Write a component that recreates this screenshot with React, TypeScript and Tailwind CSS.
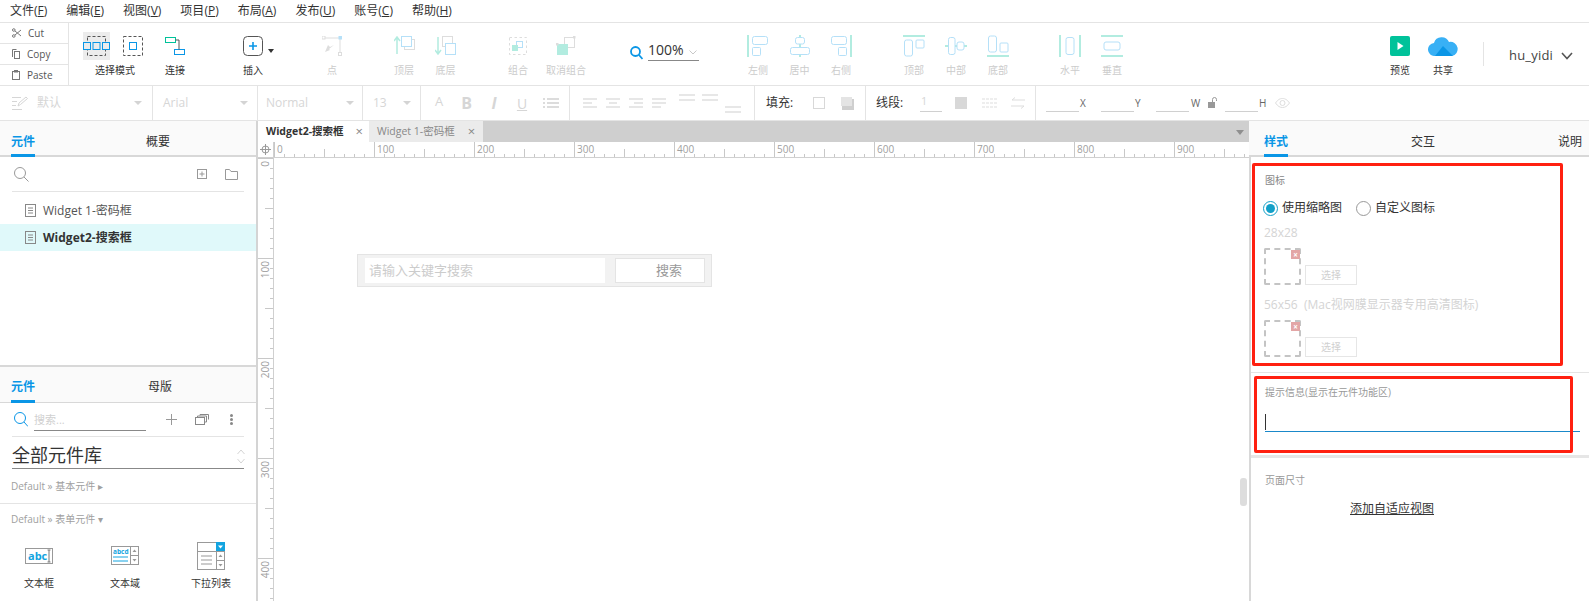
import type { ReactNode } from "react";

const menus = [
  ["文件", "F"],
  ["编辑", "E"],
  ["视图", "V"],
  ["项目", "P"],
  ["布局", "A"],
  ["发布", "U"],
  ["账号", "C"],
  ["帮助", "H"],
];

const BLUE = "#0a96e6";
const LINE = "#b5e0f8";
const TEAL = "#b2ece0";
const MUTED = "#d6d6d6";

function ToolBtn({ label, className = "", off = false, children }: { label: string; className?: string; off?: boolean; children: ReactNode }) {
  return (
    <div className={`flex flex-col items-center shrink-0 ${className}`}>
      <div className="h-[41px] pt-[4px] flex items-center justify-center">{children}</div>
      <div className={`text-[10px] leading-[12px] whitespace-nowrap ${off ? "text-[#cccccc]" : "text-[#333333]"}`}>{label}</div>
    </div>
  );
}

function Caret({ className = "" }: { className?: string }) {
  return <div className={`w-0 h-0 border-x-[4px] border-x-transparent border-t-[4px] border-t-[#d4d4d4] ${className}`} />;
}

function AlignIcon({ children }: { children: ReactNode }) {
  return (
    <svg width="22" height="22" viewBox="0 0 22 22" fill="none" stroke={LINE} strokeWidth="1">
      {children}
    </svg>
  );
}

function SelectIcon() {
  return (
    <div className="flex items-center gap-[13px] mr-[5px]">
      <div className="w-[27px] h-[28px] bg-[#ececec] flex items-center justify-center">
        <svg width="27" height="20" viewBox="0 0 27 20" fill="none">
          <rect x="4.5" y="0.5" width="18" height="19" stroke="#555" strokeDasharray="3 2" />
          <rect x="0.5" y="6.5" width="7" height="7" fill="#ececec" stroke={BLUE} />
          <rect x="10" y="6.5" width="7" height="7" fill="#ececec" stroke={BLUE} />
          <rect x="19.5" y="6.5" width="7" height="7" fill="#ececec" stroke={BLUE} />
        </svg>
      </div>
      <svg width="20" height="20" viewBox="0 0 20 20" fill="none">
        <rect x="0.5" y="0.5" width="19" height="19" stroke="#555" strokeDasharray="3 2" />
        <rect x="6.5" y="6.5" width="7" height="7" stroke={BLUE} />
      </svg>
    </div>
  );
}

function Ruler() {
  const ticks = [];
  for (let i = 0; i < 98; i++) {
    const x = i * 10 + 0.5;
    const h = i % 10 === 0 ? 15 : i % 5 === 0 ? 8 : 3;
    ticks.push(<line key={i} x1={x} x2={x} y1={15 - h} y2={15} stroke="#c8c8c8" />);
  }
  return (
    <svg width="975" height="15" className="block">
      {ticks}
      {[0, 100, 200, 300, 400, 500, 600, 700, 800, 900].map((n) => (
        <text key={n} x={n + 3} y={11} fontSize="10" fill="#a0a0a0">
          {n}
        </text>
      ))}
    </svg>
  );
}

function VRuler() {
  const ticks = [];
  for (let i = 0; i < 45; i++) {
    const y = i * 10 + 0.5;
    const w = i % 10 === 0 ? 15 : i % 5 === 0 ? 8 : 3;
    ticks.push(<line key={i} y1={y} y2={y} x1={15 - w} x2={15} stroke="#c8c8c8" />);
  }
  return (
    <svg width="15" height="445" className="block">
      {ticks}
      {[0, 100, 200, 300, 400].map((n) => (
        <text key={n} x={-n - 3} y={11} fontSize="10" fill="#a0a0a0" transform="rotate(-90)" textAnchor="end">
          {n}
        </text>
      ))}
    </svg>
  );
}

function IconSlot() {
  return (
    <div className="flex items-end gap-[4px] ml-[-1px]">
      <div className="relative w-[37px] h-[37px] border-2 border-dashed border-[#c4c4c4] rounded-[2px]">
        <div className="absolute right-[-1px] top-[0px] w-[9px] h-[9px] bg-[#e3a6a6] text-white text-[8px] leading-[9px] text-center font-bold">×</div>
      </div>
      <div className="w-[52px] h-[20px] border border-[#e6e6e6] text-[10px] leading-[18px] text-center text-[#d0d0d0]">选择</div>
    </div>
  );
}

function WidgetItem({ label, children }: { label: string; children: ReactNode }) {
  return (
    <div className="w-[86px] flex flex-col items-center">
      <div className="h-[32px] flex items-end justify-center">{children}</div>
      <div className="mt-[6px] text-[10px] leading-[14px] text-[#333333] whitespace-nowrap">{label}</div>
    </div>
  );
}

export default function App() {
  return (
    <div className="relative w-[1589px] h-[601px] overflow-hidden bg-white text-[#333333] font-['Open_Sans','Noto_Sans_CJK_SC',sans-serif]">
      {/* menu */}
      <div className="h-[23px] border-b border-[#e4e4e4] flex items-center gap-[19px] px-[10px] text-[12px]">
        {menus.map(([name, key]) => (
          <span key={key} className="whitespace-nowrap">
            {name}(<u>{key}</u>)
          </span>
        ))}
      </div>

      {/* main toolbar */}
      <div className="h-[63px] border-b border-[#e4e4e4] flex">
        <div className="w-[69px] shrink-0 border-r border-[#e4e4e4] flex flex-col text-[10px] text-[#555555]">
          <div className="h-[21px] border-b border-[#e4e4e4] flex items-center pl-[12px] gap-[7px]">
            <svg width="9" height="10" viewBox="0 0 9 10" fill="none" stroke="#777">
              <circle cx="1.8" cy="2" r="1.3" />
              <circle cx="1.8" cy="8" r="1.3" />
              <path d="M3 3l6 5M3 7l6-5" />
            </svg>
            Cut
          </div>
          <div className="h-[21px] border-b border-[#e4e4e4] flex items-center pl-[12px] gap-[7px]">
            <svg width="8" height="10" viewBox="0 0 8 10" fill="none" stroke="#777">
              <path d="M.5 8V.5h4" />
              <rect x="2.5" y="2.5" width="5" height="7" />
            </svg>
            Copy
          </div>
          <div className="h-[20px] flex items-center pl-[12px] gap-[7px]">
            <svg width="8" height="10" viewBox="0 0 8 10" fill="none" stroke="#777">
              <rect x=".5" y="1.5" width="7" height="8" />
              <rect x="2" y="0" width="4" height="2.5" fill="#777" stroke="none" />
            </svg>
            Paste
          </div>
        </div>

        <ToolBtn label="选择模式" className="w-[80px] ml-[6px]">
          <SelectIcon />
        </ToolBtn>
        <ToolBtn label="连接" className="w-[38px] ml-[1px]">
          <svg width="20" height="18" viewBox="0 0 20 18" fill="none">
            <rect x=".5" y=".5" width="10" height="5" stroke="#00c29a" />
            <rect x="9.5" y="12.5" width="10" height="5" stroke={BLUE} />
            <path d="M10.5 3h3.5v9.5" stroke="#555" />
          </svg>
        </ToolBtn>
        <ToolBtn label="插入" className="w-[42px] ml-[38px]">
          <div className="flex items-center">
            <svg width="20" height="20" viewBox="0 0 20 20" fill="none">
              <rect x=".5" y=".5" width="19" height="19" rx="4" stroke="#555" />
              <path d="M10 6v8M6 10h8" stroke={BLUE} strokeWidth="1.6" />
            </svg>
          </div>
        </ToolBtn>
        <div className="w-0 h-0 mt-[26px] ml-[-6px] mr-[-1px] border-x-[3.5px] border-x-transparent border-t-[4px] border-t-[#333333]" />
        <ToolBtn off label="点" className="w-[42px] ml-[38px]">
          <svg width="20" height="20" viewBox="0 0 20 20" fill="none">
            <path d="M2 2h16v16" stroke="#dddddd" />
            <rect y="0" width="3" height="3" fill="white" stroke="#dddddd" />
            <rect x="16.5" y="0" width="3.5" height="3.5" fill={LINE} />
            <rect x="16.5" y="16.5" width="3" height="3" fill="white" stroke="#dddddd" />
            <path d="M3 16l3-7 2 2 4-2-5 4 1 1z" fill="#dddddd" />
          </svg>
        </ToolBtn>
        <ToolBtn off label="顶层" className="w-[42px] ml-[30px]">
          <svg width="21" height="20" viewBox="0 0 21 20" fill="none">
            <path d="M3 18V2M0 5l3-4 3 4" stroke={TEAL} strokeWidth="1.5" />
            <rect x="10.5" y="3.5" width="10" height="10" stroke="#dddddd" />
            <rect x="7.5" y=".5" width="10" height="10" fill="white" stroke={LINE} />
          </svg>
        </ToolBtn>
        <ToolBtn off label="底层" className="w-[41px]">
          <svg width="21" height="20" viewBox="0 0 21 20" fill="none">
            <path d="M3 18V1M0 14l3 4 3-4" stroke={TEAL} strokeWidth="1.5" />
            <rect x="7.5" y=".5" width="10" height="10" stroke="#dddddd" />
            <rect x="10.5" y="7.5" width="10" height="11" fill="white" stroke={LINE} />
          </svg>
        </ToolBtn>
        <ToolBtn off label="组合" className="w-[42px] ml-[31px]">
          <svg width="20" height="20" viewBox="0 0 20 20" fill="none">
            <rect x="1.5" y="1.5" width="17" height="17" stroke="#dddddd" strokeDasharray="2.5 2.5" />
            <rect x="8.5" y="5.5" width="6" height="6" stroke={LINE} />
            <rect x="4" y="9" width="6" height="6" fill={TEAL} />
          </svg>
        </ToolBtn>
        <ToolBtn off label="取消组合" className="w-[42px] ml-[6px]">
          <svg width="20" height="20" viewBox="0 0 20 20" fill="none">
            <rect x="8.5" y="1.5" width="10" height="10" stroke="#dddddd" />
            <rect x="1" y="8" width="11" height="11" fill={TEAL} />
            <rect x="0" y="7" width="2.5" height="2.5" fill="#dddddd" />
            <rect x="17" y="0" width="2.5" height="2.5" fill="#dddddd" />
          </svg>
        </ToolBtn>

        <div className="w-[69px] ml-[43px] shrink-0 h-[38px] flex items-end">
          <svg width="13" height="14" viewBox="0 0 13 14" fill="none" stroke={BLUE} strokeWidth="1.8" className="mb-[1px] shrink-0">
            <circle cx="5.5" cy="5.5" r="4.5" />
            <path d="M9 9l3.5 4" />
          </svg>
          <div className="ml-[5px] w-[51px] h-[21px] border-b border-[#888888] flex items-center text-[14px] leading-[20px] text-[#333333] shrink-0">
            100%
            <svg width="8" height="5" viewBox="0 0 8 5" fill="none" stroke="#c8c8c8" className="ml-[5px] mt-[4px]">
              <path d="M.5.5L4 4 7.5.5" />
            </svg>
          </div>
        </div>

        <ToolBtn off label="左侧" className="w-[42px] ml-[38px]">
          <AlignIcon>
            <path d="M1 0v22" stroke={TEAL} strokeWidth="2" />
            <rect x="5.5" y="1.5" width="15" height="8" rx="2" />
            <rect x="5.5" y="12.5" width="8" height="8" rx="1" />
          </AlignIcon>
        </ToolBtn>
        <ToolBtn off label="居中" className="w-[41px]">
          <AlignIcon>
            <path d="M11 0v2M11 9v3M11 20v2" stroke={TEAL} strokeWidth="2" />
            <rect x="6.5" y="2.5" width="9" height="6.5" rx="2" />
            <rect x="1.5" y="12.5" width="19" height="7" rx="2" />
          </AlignIcon>
        </ToolBtn>
        <ToolBtn off label="右侧" className="w-[42px]">
          <AlignIcon>
            <path d="M21 0v22" stroke={TEAL} strokeWidth="2" />
            <rect x="1.5" y="1.5" width="15" height="8" rx="2" />
            <rect x="8.5" y="12.5" width="8" height="8" rx="1" />
          </AlignIcon>
        </ToolBtn>
        <ToolBtn off label="顶部" className="w-[42px] ml-[31px]">
          <AlignIcon>
            <path d="M0 1h22" stroke={TEAL} strokeWidth="2" />
            <rect x="1.5" y="5" width="8" height="16" rx="2" />
            <rect x="13" y="5" width="8" height="8" rx="1" />
          </AlignIcon>
        </ToolBtn>
        <ToolBtn off label="中部" className="w-[42px]">
          <AlignIcon>
            <path d="M0 11h3M10 11h2M19 11h3" stroke={TEAL} strokeWidth="2" />
            <rect x="3.5" y="2.5" width="6.5" height="17" rx="2" />
            <rect x="12" y="7" width="7" height="8" rx="2" />
          </AlignIcon>
        </ToolBtn>
        <ToolBtn off label="底部" className="w-[42px]">
          <AlignIcon>
            <path d="M0 21h22" stroke={TEAL} strokeWidth="2" />
            <rect x="1.5" y="1" width="8" height="16" rx="2" />
            <rect x="13" y="8" width="8" height="9" rx="1" />
          </AlignIcon>
        </ToolBtn>
        <ToolBtn off label="水平" className="w-[42px] ml-[30px]">
          <AlignIcon>
            <path d="M1 0v22M21 0v22" stroke={TEAL} strokeWidth="2" />
            <rect x="7" y="2.5" width="8" height="17" rx="2" />
          </AlignIcon>
        </ToolBtn>
        <ToolBtn off label="垂直" className="w-[42px]">
          <AlignIcon>
            <path d="M0 1h22M0 21h22" stroke={TEAL} strokeWidth="2" />
            <rect x="3" y="7" width="16" height="8" rx="2" />
          </AlignIcon>
        </ToolBtn>

        <ToolBtn label="预览" className="w-[42px] ml-[246px]">
          <svg width="20" height="20" viewBox="0 0 20 20">
            <rect width="20" height="20" rx="2" fill="#00c29a" />
            <path d="M7.5 6l6 4-6 4z" fill="white" />
          </svg>
        </ToolBtn>
        <ToolBtn label="共享" className="w-[42px] ml-[1px]">
          <svg width="30" height="20" viewBox="0 0 30 20">
            <path d="M7 20a6.5 6.5 0 0 1-1-13 8 8 0 0 1 15-1 6 6 0 0 1 3 14z" fill="#38b0f5" />
            <path d="M7 20l8-10 10 10z" fill="#0a96e6" />
          </svg>
        </ToolBtn>
        <div className="w-px h-[24px] mt-[19px] ml-[19px] bg-[#e4e4e4]" />
        <div className="ml-[25px] h-[42px] mt-[12px] flex items-center text-[13px] tracking-[0.2px] text-[#444444] gap-[8px] whitespace-nowrap">
          hu_yidi
          <svg width="12" height="8" viewBox="0 0 12 8" fill="none" stroke="#555" strokeWidth="1.6">
            <path d="M1 1l5 5.5L11 1" />
          </svg>
        </div>
      </div>

      {/* format bar */}
      <div className="h-[35px] border-b border-[#e4e4e4] flex text-[12px] text-[#d6d6d6]">
        <div className="w-[153px] border-r border-[#e4e4e4] flex items-center pl-[12px] pr-[10px]">
          <svg width="16" height="14" viewBox="0 0 16 14" fill="none" stroke={MUTED}>
            <path d="M0 1.5h9M0 5.5h5M0 9.5h4M0 13.5h10M6 10l1-3 7-6 1.5 1.5-7 6z" />
          </svg>
          <span className="ml-[9px]">默认</span>
          <Caret className="ml-auto" />
        </div>
        <div className="w-[105px] border-r border-[#e4e4e4] flex items-center pl-[10px] pr-[9px]">
          Arial
          <Caret className="ml-auto" />
        </div>
        <div className="w-[105px] border-r border-[#e4e4e4] flex items-center pl-[8px] pr-[8px]">
          Normal
          <Caret className="ml-auto" />
        </div>
        <div className="w-[58px] border-r border-[#e4e4e4] flex items-center pl-[10px] pr-[9px]">
          13
          <Caret className="ml-auto" />
        </div>
        <div className="w-[149px] border-r border-[#e4e4e4] flex items-center pl-[4px]">
          <span className="text-[13px] w-[28px] text-center mb-[3px]">A</span>
          <span className="text-[16px] font-bold w-[27px] text-center">B</span>
          <span className="text-[16px] font-bold italic w-[28px] text-center">I</span>
          <span className="text-[14px] underline w-[28px] text-center">U</span>
          <svg width="16" height="12" viewBox="0 0 16 12" stroke="#dcdcdc" strokeWidth="2" className="ml-[7px]">
            <path d="M0 2h2M4 2h12M0 6h2M4 6h12M0 10h2M4 10h12" />
          </svg>
        </div>
        <div className="w-[185px] border-r border-[#e4e4e4] flex items-center pl-[13px] gap-[9px]">
          {["M0 1h14M0 5h9M0 9h14", "M0 1h14M3 5h8M0 9h14", "M0 1h14M5 5h9M0 9h14", "M0 1h14M0 5h14M0 9h9"].map((d) => (
            <svg key={d} width="14" height="10" stroke="#e0e0e0" strokeWidth="1.5">
              <path d={d} />
            </svg>
          ))}
          <div className="flex gap-[7px] ml-[4px]">
            <svg width="16" height="7" className="mb-[12px]" stroke="#e0e0e0" strokeWidth="1.5">
              <path d="M0 1h16M0 6h16" />
            </svg>
            <svg width="16" height="7" stroke="#e0e0e0" strokeWidth="1.5">
              <path d="M0 1h16M0 6h16" />
            </svg>
            <svg width="16" height="7" className="mt-[12px]" stroke="#e0e0e0" strokeWidth="1.5">
              <path d="M0 1h16M0 6h16" />
            </svg>
          </div>
        </div>
        <div className="w-[111px] border-r border-[#e4e4e4] flex items-center pl-[11px]">
          <span className="text-[#333333] text-[12px] w-[47px]">填充:</span>
          <div className="w-[12px] h-[12px] border border-[#d8d8d8]" />
          <svg width="13" height="13" className="ml-[16px]">
            <rect x="1" y="2" width="12" height="11" fill="#cfcfcf" />
            <rect width="11" height="9" fill="#e4e4e4" />
          </svg>
        </div>
        <div className="w-[170px] border-r border-[#e4e4e4] flex items-center pl-[10px]">
          <span className="text-[#333333] text-[12px] w-[44px]">线段:</span>
          <div className="w-[22px] h-[18px] border-b border-[#d0d0d0] pl-[1px] text-[11px] leading-[14px]">1</div>
          <div className="ml-[13px] w-[12px] h-[12px] bg-[#d8d8d8]" />
          <svg width="15" height="10" className="ml-[15px]" stroke="#dddddd">
            <path d="M0 1h15M0 5h15M0 9h15" strokeDasharray="3 1" />
          </svg>
          <svg width="14" height="12" fill="none" className="ml-[14px]" stroke="#dddddd">
            <path d="M14 3H1l3-2.5M0 9h13l-3 2.5" />
          </svg>
        </div>
        <div className="flex items-center text-[10px] text-[#666666]">
          <div className="ml-[10px] w-[33px] h-[18px] border-b border-[#d0d0d0]" />
          <span className="ml-[1px] w-[21px]">X</span>
          <div className="w-[33px] h-[18px] border-b border-[#d0d0d0]" />
          <span className="ml-[1px] w-[21px]">Y</span>
          <div className="w-[33px] h-[18px] border-b border-[#d0d0d0]" />
          <span className="ml-[2px] w-[15px]">W</span>
          <svg width="10" height="11" className="mb-[1px] ml-[2px]" fill="none">
            <rect y="5" width="7" height="6" fill="#999" />
            <path d="M4.5 5V2.500a2 2 0 0 1 4 0V4" stroke="#999" />
          </svg>
          <div className="ml-[7px] w-[33px] h-[18px] border-b border-[#d0d0d0]" />
          <span className="ml-[1px] w-[14px]">H</span>
          <svg width="15" height="10" viewBox="0 0 15 10" fill="none" stroke="#dddddd" className="ml-[2px]">
            <path d="M.5 5C3 1.500 5 .5 7.500 .5S12 1.500 14.500 5C12 8.500 10 9.500 7.500 9.500S3 8.500 .5 5z" />
            <circle cx="7.500" cy="5" r="2.500" />
          </svg>
        </div>
      </div>

      {/* workspace */}
      <div className="flex h-[480px]">
        {/* left */}
        <div className="w-[258px] shrink-0 border-r-2 border-[#d4d4d4] flex flex-col">
          <div className="h-[36px] shrink-0 bg-[#fafafa] border-b-2 border-[#d8d8d8] flex text-[12px]">
            <div className="ml-[11px] w-[24px] h-[36px] border-b-[3px] border-[#0a96e6] text-[#0a96e6] font-semibold pt-[13px] leading-[16px]">元件</div>
            <div className="ml-[111px] pt-[13px] leading-[16px]">概要</div>
          </div>
          <div className="h-[210px] shrink-0 border-b-2 border-[#d8d8d8]">
            <div className="mx-[12px] h-[35px] border-b border-[#e4e4e4] flex items-center pl-[2px]">
              <svg width="15" height="15" viewBox="0 0 15 15" fill="none" stroke="#999">
                <circle cx="6" cy="6" r="5.500" />
                <path d="M10 10l4.500 4.500" />
              </svg>
              <svg width="10" height="10" viewBox="0 0 10 10" fill="none" stroke="#999" className="ml-[168px]">
                <rect x=".5" y=".5" width="9" height="9" />
                <path d="M5 2.500v5M2.500 5h5" />
              </svg>
              <svg width="13" height="11" viewBox="0 0 13 11" fill="none" stroke="#999" className="ml-[18px]">
                <path d="M.5 10.500V.5h4l1.500 2h6.500v8z" />
              </svg>
            </div>
            <div className="pt-[5px]">
              {[
                ["Widget 1-密码框", false],
                ["Widget2-搜索框", true],
              ].map(([name, on]) => (
                <div key={name as string} className={`h-[27px] flex items-center pl-[25px] gap-[7px] text-[12px] ${on ? "bg-[#e0f9fa] font-bold text-[#333333]" : "text-[#555555]"}`}>
                  <svg width="11" height="13" viewBox="0 0 11 13" fill="none" stroke="#888" className="shrink-0">
                    <rect x=".5" y=".5" width="10" height="12" />
                    <path d="M3 4h5M3 6.500h5M3 9h5" />
                  </svg>
                  {name}
                </div>
              ))}
            </div>
          </div>
          <div className="h-[36px] shrink-0 bg-[#fafafa] border-b border-[#d8d8d8] flex text-[12px]">
            <div className="ml-[11px] w-[24px] h-[36px] border-b-[3px] border-[#0a96e6] text-[#0a96e6] font-semibold pt-[12px] leading-[16px]">元件</div>
            <div className="ml-[113px] pt-[12px] leading-[16px]">母版</div>
          </div>
          <div className="mx-[12px] h-[34px] shrink-0 border-b border-[#e4e4e4] flex items-center pl-[2px]">
            <svg width="14" height="15" viewBox="0 0 14 15" fill="none" stroke={BLUE} className="shrink-0">
              <circle cx="6" cy="6" r="5.500" />
              <path d="M10 10l4 4.500" />
            </svg>
            <div className="ml-[6px] w-[112px] h-[20px] mt-[2px] border-b border-[#888888] text-[11px] leading-[17px] text-[#d0d0d0]">搜索...</div>
            <svg width="11" height="11" stroke="#999" className="ml-[20px]">
              <path d="M5.500 0v11M0 5.500h11" />
            </svg>
            <svg width="14" height="11" viewBox="0 0 14 11" fill="none" stroke="#888" className="ml-[18px]">
              <rect x=".5" y="3.500" width="9" height="7" />
              <path d="M2.500 3.500V2h9v6H9.500M5 1.500V.5h8.500v5" />
            </svg>
            <svg width="3" height="11" className="ml-[21px]" fill="#888">
              <circle cx="1.500" cy="1.500" r="1.500" />
              <circle cx="1.500" cy="5.500" r="1.500" />
              <circle cx="1.500" cy="9.500" r="1.500" />
            </svg>
          </div>
          <div className="mx-[12px] h-[32px] shrink-0 border-b border-[#888888] flex items-end pb-[1px] justify-between text-[18px] leading-[24px] text-[#333333]">
            全部元件库
            <svg width="8" height="15" viewBox="0 0 8 15" fill="none" stroke="#d4d4d4" className="mr-[-1px] mb-[3px]">
              <path d="M.5 5L4 1l3.500 4M.5 10L4 14l3.500-4" />
            </svg>
          </div>
          <div className="h-[35px] shrink-0 border-b border-[#e4e4e4] pl-[11px] text-[10px] leading-[34px] text-[#a0a0a0]">Default » 基本元件 ▸</div>
          <div className="pl-[11px] pt-[8px] text-[10px] leading-[14px] text-[#a0a0a0]">Default » 表单元件 ▾</div>
          <div className="flex mt-[12px] ml-[-4px]">
            <WidgetItem label="文本框">
              <svg width="28" height="16" viewBox="0 0 28 16" className="mb-[6px]">
                <rect x=".5" y=".5" width="27" height="15" fill="none" stroke="#999" />
                <text x="3" y="12" fontSize="11" fontWeight="700" fill="#13a4e0">abc</text>
                <path d="M24 2v12M22.500 2h3M22.500 14h3" stroke="#777" fill="none" />
              </svg>
            </WidgetItem>
            <WidgetItem label="文本域">
              <svg width="28" height="19" viewBox="0 0 28 19" fill="none" className="mb-[5px]">
                <rect x=".5" y=".5" width="27" height="18" stroke="#999" />
                <path d="M19.500 0v19M19.500 9.500H28" stroke="#999" />
                <text x="2" y="8" fontSize="6.500" fontWeight="700" fill="#13a4e0">abcd</text>
                <path d="M2 11h15M2 15h15" stroke="#13a4e0" />
                <path d="M21.500 6l2-2.500 2 2.500zM21.500 13l2 2.500 2-2.500z" fill="#999" />
              </svg>
            </WidgetItem>
            <WidgetItem label="下拉列表">
              <svg width="28" height="28" viewBox="0 0 28 28" fill="none">
                <rect x=".5" y=".5" width="27" height="27" stroke="#999" />
                <path d="M0 9.500h28M19.500 0v28M19.500 18.500H28" stroke="#999" />
                <rect x="19" y="0" width="9" height="9" fill="#13a4e0" />
                <path d="M21 3.500h5l-2.500 3z" fill="white" />
                <path d="M4 14h11M4 18h11M4 22h11" stroke="#999" />
                <path d="M21.500 15l2-2.500 2 2.500zM21.500 22l2 2.500 2-2.500z" fill="#999" />
              </svg>
            </WidgetItem>
          </div>
        </div>

        {/* canvas */}
        <div className="w-[991px] shrink-0 flex flex-col relative">
          <div className="h-[21px] shrink-0 bg-[#cfcfcf] flex text-[10.5px]">
            <div className="w-[111px] bg-white flex items-center pl-[8px] font-bold text-[#333333] whitespace-nowrap">
              Widget2-搜索框
              <span className="ml-[12px] font-normal text-[13px] text-[#888888]">×</span>
            </div>
            <div className="w-[114px] bg-[#ebebeb] flex items-center pl-[8px] text-[#888888] whitespace-nowrap">
              Widget 1-密码框
              <span className="ml-[13px] text-[13px]">×</span>
            </div>
            <div className="w-0 h-0 ml-auto mr-[5px] mt-[9px] border-x-[4px] border-x-transparent border-t-[5px] border-t-[#8f8f8f]" />
          </div>
          <div className="h-[16px] shrink-0 flex border-b border-[#d0d0d0]">
            <div className="w-[16px] shrink-0 border-r border-[#d0d0d0] flex items-center justify-center">
              <svg width="11" height="11" viewBox="0 0 11 11" fill="none" stroke="#999">
                <circle cx="5.500" cy="5.500" r="3.500" />
                <path d="M5.500 0v11M0 5.500h11" />
              </svg>
            </div>
            <Ruler />
          </div>
          <div className="flex-1 flex min-h-0">
            <div className="w-[16px] shrink-0 border-r border-[#d0d0d0] overflow-hidden">
              <VRuler />
            </div>
            <div className="flex-1 relative">
              <div className="absolute left-[83px] top-[96px] w-[355px] h-[33px] border border-[#e4e4e4] bg-[#f2f2f2] flex items-center pl-[7px]">
                <div className="w-[240px] h-[25px] bg-white text-[13px] leading-[25px] pl-[4px] text-[#cccccc]">请输入关键字搜索</div>
                <div className="ml-[10px] w-[90px] h-[25px] bg-white border border-[#e4e4e4] text-[13px] leading-[23px] pl-[40px] text-[#999999]">搜索</div>
              </div>
            </div>
          </div>
          <div className="absolute right-[2px] top-[357px] w-[7px] h-[28px] rounded-[3px] bg-[#dddddd]" />
        </div>

        {/* right */}
        <div className="flex-1 min-w-0 flex flex-col">
          <div className="h-[36px] shrink-0 bg-[#fafafa] border-b-2 border-[#d8d8d8] flex text-[12px]">
            <div className="ml-[15px] w-[24px] h-[36px] border-b-[3px] border-[#0a96e6] text-[#0a96e6] font-semibold pt-[13px] leading-[16px]">样式</div>
            <div className="ml-[123px] pt-[13px] leading-[16px]">交互</div>
            <div className="ml-[123px] pt-[13px] leading-[16px]">说明</div>
          </div>
          <div className="flex-1 border-l-2 border-[#d8d8d8]">
            <div className="h-[216px] border-b border-[#e4e4e4] pl-[14px] pt-[16px]">
              <div className="text-[10px] leading-[14px] text-[#888888]">图标</div>
              <div className="flex items-center mt-[13px] ml-[-2px] text-[12px] leading-[16px]">
                <div className="w-[15px] h-[15px] rounded-full border border-[#13a0c8] flex items-center justify-center">
                  <div className="w-[9px] h-[9px] rounded-full bg-[#13a0c8]" />
                </div>
                <span className="ml-[4px]">使用缩略图</span>
                <div className="ml-[14px] w-[15px] h-[15px] rounded-full border border-[#999999]" />
                <span className="ml-[4px]">自定义图标</span>
              </div>
              <div className="mt-[10px] ml-[-1px] text-[12px] leading-[14px] text-[#d4d4d4]">28x28</div>
              <div className="mt-[8px]">
                <IconSlot />
              </div>
              <div className="mt-[13px] ml-[-1px] text-[12px] leading-[14px] text-[#d4d4d4] whitespace-pre">56x56  (Mac视网膜显示器专用高清图标)</div>
              <div className="mt-[8px]">
                <IconSlot />
              </div>
            </div>
            <div className="h-[85px] border-b-[3px] border-[#e6e6e6] pl-[14px] pr-[9px] pt-[12px]">
              <div className="text-[10px] leading-[14px] text-[#999999] whitespace-nowrap">提示信息(显示在元件功能区)</div>
              <div className="mt-[15px] h-[18px] border-b border-[#1a88c9]">
                <div className="w-px h-[16px] bg-[#333333]" />
              </div>
            </div>
            <div className="pl-[14px] pt-[15px]">
              <div className="text-[10px] leading-[14px] text-[#999999]">页面尺寸</div>
              <div className="mt-[14px] ml-[85px] text-[12px] leading-[16px] underline text-[#333333]">添加自适应视图</div>
            </div>
          </div>
        </div>
      </div>

      {/* red review marks on top of the screenshot */}
      <div className="absolute left-[1252px] top-[163px] w-[311px] h-[203px] border-[3px] border-[#ff2010] rounded-[2px] pointer-events-none" />
      <div className="absolute left-[1254px] top-[376px] w-[319px] h-[77px] border-[3px] border-[#ff2010] rounded-[2px] pointer-events-none" />
    </div>
  );
}
